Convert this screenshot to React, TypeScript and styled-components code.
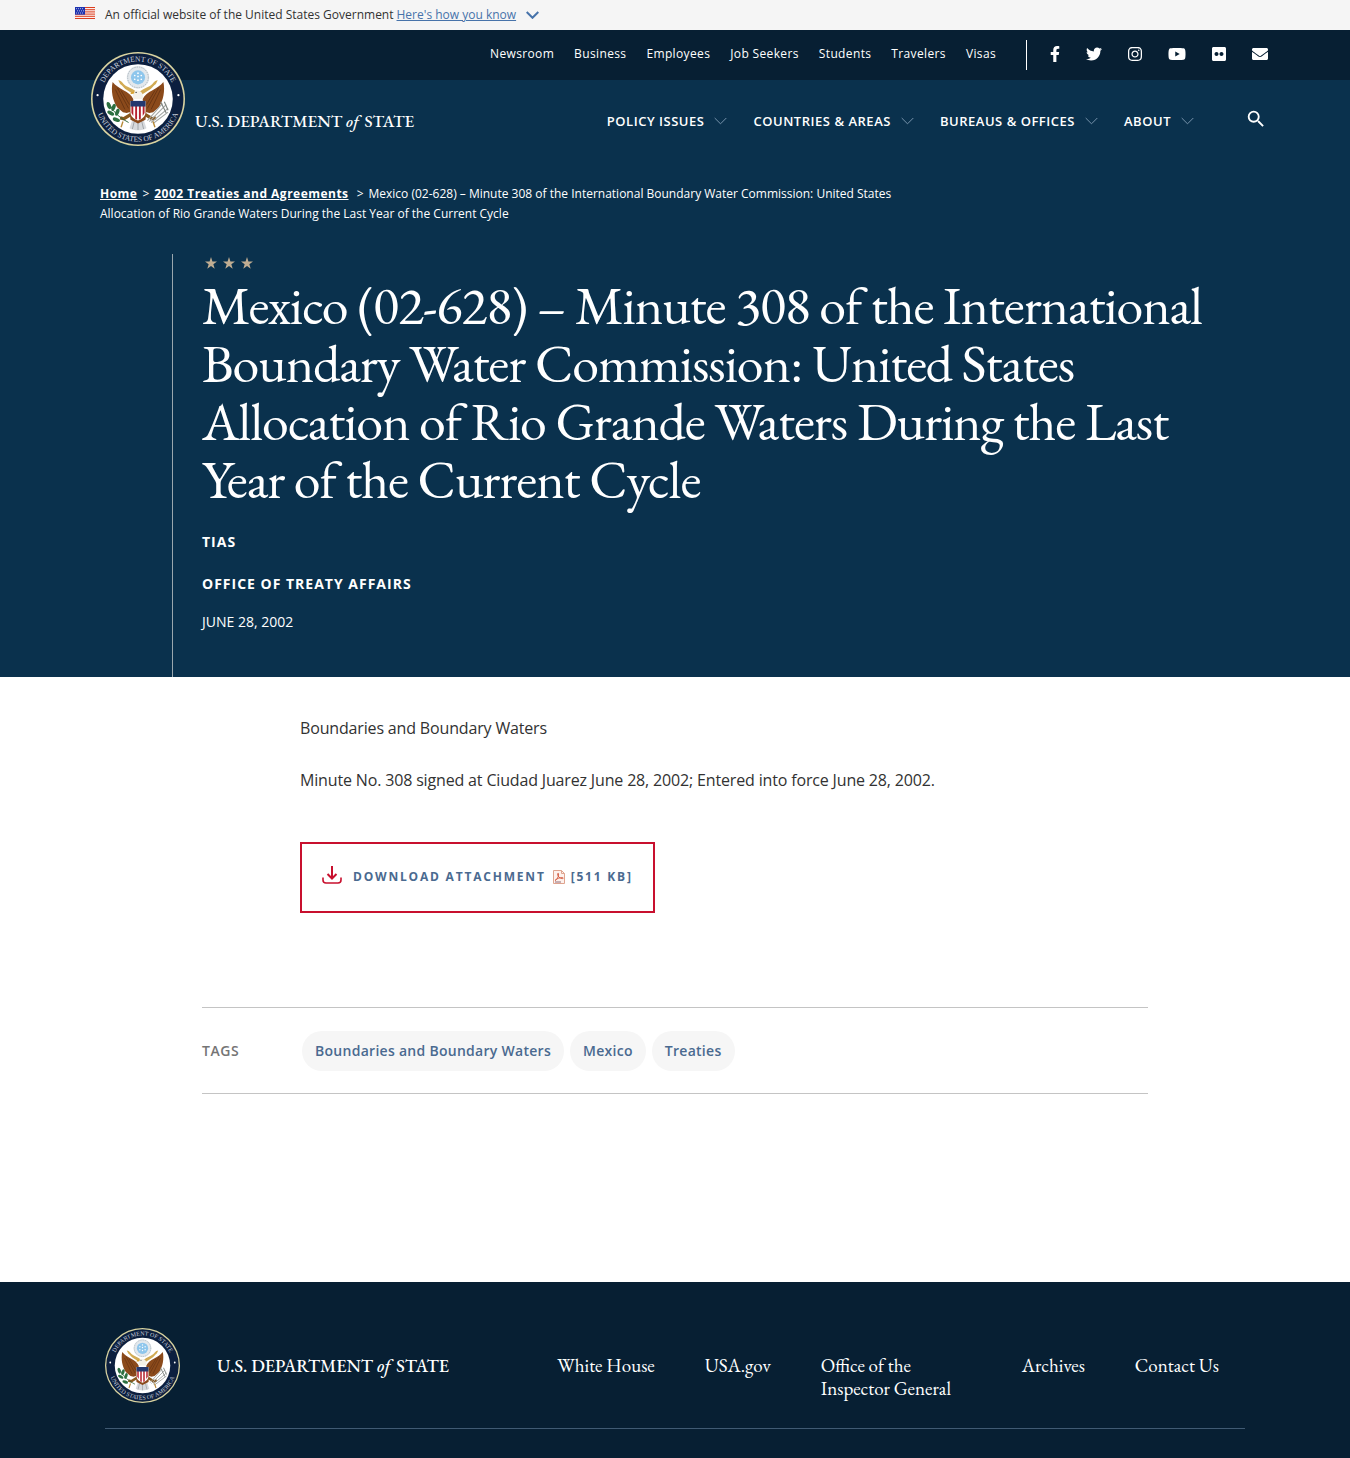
import React from "react";
import styled, { createGlobalStyle } from "styled-components";
import {
  FaFacebookF,
  FaTwitter,
  FaInstagram,
  FaYoutube,
  FaFlickr,
  FaEnvelope,
} from "react-icons/fa";
import { MdSearch } from "react-icons/md";

const navy = "#0a314d";
const midnight = "#071f33";
const sans = '"Open Sans", "Noto Sans", sans-serif';
const serif = '"EB Garamond", "Liberation Serif", serif';

const GlobalStyle = createGlobalStyle`
  *, *::before, *::after { box-sizing: border-box; }
  body { margin: 0; background: #fff; color: #323232; font-family: ${sans}; }
  a { color: inherit; text-decoration: none; }
  ul, ol { list-style: none; margin: 0; padding: 0; }
  p, h1, h2 { margin: 0; }
  button { background: none; border: 0; padding: 0; font: inherit; color: inherit; cursor: pointer; }
  svg { display: block; flex: none; }
`;

const GovBanner = styled.aside`
  display: flex;
  align-items: flex-start;
  height: 30px;
  padding: 0 75px;
  background: #f5f5f5;
  font-size: 12px;
  line-height: 30px;

  > svg {
    margin-top: 7px;
  }
`;

const BannerText = styled.p`
  margin-left: 10px;
`;

const BannerButton = styled.button`
  display: inline-flex;
  align-items: center;
  gap: 10px;
  margin-left: 3px;
  color: #4773aa;

  span {
    text-decoration: underline;
  }
`;

const Header = styled.header`
  background: ${navy};
  color: #fff;
`;

const UtilityBar = styled.div`
  display: flex;
  justify-content: flex-end;
  align-items: center;
  height: 50px;
  padding-right: 82px;
  background: ${midnight};
`;

const UtilityLinks = styled.ul`
  display: flex;
  gap: 20px;
  font-size: 12px;
  line-height: 18px;
  letter-spacing: 0.03em;
  padding-bottom: 2px;
`;

const SocialLinks = styled.ul`
  display: flex;
  align-items: center;
  gap: 26px;
  height: 30px;
  margin-left: 30px;
  padding: 0 0 2px 23px;
  border-left: 1px solid #fff;
`;

const MainBar = styled.div`
  display: flex;
  align-items: flex-start;
  justify-content: space-between;
  height: 100px;
  padding: 0 83px 0 91px;
`;

const Brand = styled.a`
  display: flex;
  align-items: flex-start;
  gap: 10px;

  svg {
    margin-top: -28px;
  }
`;

const BrandName = styled.span<{ $size: number; $top: number }>`
  padding-top: ${(p) => p.$top}px;
  font-family: ${serif};
  font-size: ${(p) => p.$size}px;
  font-weight: 500;
  line-height: 24px;
  white-space: nowrap;

  em {
    margin-right: 2px;
  }
`;

const MainNav = styled.nav`
  display: flex;
  align-items: flex-start;
  padding-top: 28px;
`;

const MainLinks = styled.ul`
  display: flex;
  gap: 26px;
  padding-top: 2px;
`;

const MenuButton = styled.button`
  display: flex;
  align-items: center;
  gap: 10px;
  font-size: 13px;
  font-weight: 600;
  line-height: 22px;
  letter-spacing: 0.04em;
  text-transform: uppercase;
`;

const SearchButton = styled.button`
  margin-left: 51px;
`;

const Hero = styled.section`
  background: ${navy};
  color: #fff;
  padding-top: 4px;
`;

const Crumbs = styled.nav`
  width: 60%;
  margin-left: 100px;
  font-size: 12px;
  line-height: 20px;

  a {
    font-weight: 700;
    text-decoration: underline;
    letter-spacing: 0.04em;
  }
`;

const CrumbArrow = styled.span`
  margin: 0 5px;
`;

const HeroBody = styled.div`
  margin: 30px 130px 0 172px;
  padding: 3px 0 43px 29px;
  border-left: 1px solid #9aa7ae;
`;

const Stars = styled.div`
  display: flex;
  gap: 6px;
  padding: 0 3px;
  color: #c0ad92;
  margin-bottom: 7px;
`;

const Title = styled.h1`
  margin-bottom: 22px;
  font-family: ${serif};
  font-size: 54px;
  font-weight: 400;
  line-height: 58px;
  letter-spacing: -0.02em;
`;

const Eyebrow = styled.p`
  margin-bottom: 18px;
  font-size: 14px;
  font-weight: 700;
  line-height: 24px;
  letter-spacing: 1px;
  text-transform: uppercase;
`;

const DateLine = styled.p`
  margin-top: -4px;
  font-size: 14px;
  line-height: 24px;
  text-transform: uppercase;
`;

const Article = styled.article`
  padding: 38px 202px 188px;
`;

const Prose = styled.div`
  padding: 0 98px;

  p {
    font-size: 16px;
    line-height: 26px;
    letter-spacing: -0.01em;
    margin-bottom: 26px;
  }
`;

const Download = styled.a`
  display: inline-flex;
  align-items: center;
  height: 71px;
  margin-top: 23px;
  padding: 0 20px 2px;
  border: 2px solid #c8102e;
  color: #4a6a90;
  font-size: 12px;
  font-weight: 700;
  letter-spacing: 0.15em;
  text-transform: uppercase;

  > svg {
    margin: 0 11px 4px 0;
  }
`;

const FileSize = styled.span`
  display: flex;
  align-items: center;
  gap: 6px;
  margin-left: 7px;
`;

const TagBar = styled.section`
  display: flex;
  align-items: center;
  margin-top: 94px;
  height: 87px;
  border-top: 1px solid #c4c4c4;
  border-bottom: 1px solid #c4c4c4;
`;

const TagHeading = styled.h2`
  width: 100px;
  font-size: 14px;
  font-weight: 600;
  line-height: 24px;
  letter-spacing: 0.04em;
  color: #757575;
  text-transform: uppercase;
`;

const TagList = styled.ul`
  display: flex;
  gap: 6px;
`;

const Tag = styled.a`
  display: block;
  padding: 0 13px;
  border-radius: 20px;
  background: #f6f6f6;
  color: #4a6a90;
  font-size: 14px;
  font-weight: 600;
  line-height: 40px;
  letter-spacing: 0.02em;
`;

const Footer = styled.footer`
  padding: 46px 105px 29px;
  background: ${midnight};
  color: #fff;
`;

const FooterRow = styled.div`
  display: flex;
  align-items: flex-start;
  justify-content: space-between;
  padding: 0 26px 25px 0;
  border-bottom: 1px solid #405a73;
`;

const FooterBrand = styled.a`
  display: flex;
  gap: 37px;
`;

const FooterLinks = styled.ul`
  display: flex;
  gap: 50px;
  padding-top: 26px;
  font-family: ${serif};
  font-size: 19px;
  line-height: 23px;
`;

const FooterItem = styled.li<{ $width?: number }>`
  width: ${(p) => (p.$width ? `${p.$width}px` : "auto")};
`;

function Flag() {
  return (
    <svg width="20" height="12" viewBox="0 0 20 11" preserveAspectRatio="none" aria-hidden="true">
      <rect width="20" height="11" fill="#fff" />
      {[0, 2, 4, 6, 8, 10].map((y) => (
        <rect key={y} y={y} width="20" height="1" fill="#db3e1f" />
      ))}
      <rect width="10" height="7" fill="#1e33b1" />
      {[1, 3, 5].map((y) =>
        [1, 3, 5, 7].map((x) => (
          <rect key={`${x}-${y}`} x={x + (y === 3 ? 1 : 0)} y={y} width="1" height="1" fill="#a5add8" />
        ))
      )}
    </svg>
  );
}

function Chevron({ color, weight }: { color: string; weight: number }) {
  return (
    <svg width="13" height="8" viewBox="0 0 13 8" fill="none" aria-hidden="true">
      <path d="M.7 1l5.8 5.8L12.3 1" stroke={color} strokeWidth={weight} />
    </svg>
  );
}

function Star() {
  return (
    <svg width="12" height="12" viewBox="0 0 24 24" aria-hidden="true">
      <path
        fill="currentColor"
        d="M12 0l2.9 9H24l-7.300 5.500L19.400 23.500 12 18l-7.400 5.500 2.700-9L0 9h9.100z"
      />
    </svg>
  );
}

function Seal({ size, id }: { size: number; id: string }) {
  return (
    <svg width={size} height={size} viewBox="0 0 100 100" aria-hidden="true">
      <defs>
        <path id={`${id}-top`} d="M10 50a40 40 0 0 1 80 0" />
        <path id={`${id}-bottom`} d="M4.500 50a45.500 45.500 0 0 0 91 0" />
      </defs>
      <circle cx="50" cy="50" r="50" fill="#d9d3a0" />
      <circle cx="50" cy="50" r="48.300" fill="#0c1f3f" />
      <circle cx="50" cy="50" r="37" fill="#fff" />
      <g fill="#c9cfdc" fontFamily="Liberation Serif, serif" fontSize="8" textAnchor="middle">
        <text>
          <textPath href={`#${id}-top`} startOffset="50%">DEPARTMENT OF STATE</textPath>
        </text>
        <text>
          <textPath href={`#${id}-bottom`} startOffset="50%">UNITED STATES OF AMERICA</textPath>
        </text>
      </g>
      <circle cx="7" cy="46" r="1.200" fill="#fff" />
      <circle cx="93" cy="46" r="1.200" fill="#fff" />

      {/* scroll across the wings */}
      <path d="M29 30c4 0 5 5 10 7s7 4 11 6c4-2 6-4 11-6s6-7 10-7l-2 4c-3 2-4 5-8 7l-8 5h-6l-8-5c-4-2-5-5-8-7z" fill="#d2ab54" />

      {/* glory */}
      <circle cx="50" cy="27" r="12" fill="#e3e8ec" />
      <circle cx="50" cy="27" r="11" fill="none" stroke="#aab4bc" strokeWidth="1" strokeDasharray="1.500 1" />
      <circle cx="50" cy="27" r="7.500" fill="#8ec6ec" />
      <g fill="#fff">
        <circle cx="50" cy="22.500" r=".9" />
        <circle cx="46.500" cy="25" r=".9" />
        <circle cx="50" cy="26" r=".9" />
        <circle cx="53.500" cy="25" r=".9" />
        <circle cx="46.500" cy="29" r=".9" />
        <circle cx="50" cy="30" r=".9" />
        <circle cx="53.500" cy="29" r=".9" />
      </g>

      {/* wings */}
      <path
        d="M23 32c-2 9 0 20 5 27l6 5 4 1 6-2 1-13c-2-4-6-7-10-9-5-3-9-5-12-9z"
        fill="#8b4a1b"
      />
      <path
        d="M77 32c2 9 0 20-5 27l-6 5-4 1-6-2-1-13c2-4 6-7 10-9 5-3 9-5 12-9z"
        fill="#8b4a1b"
      />
      <path
        d="M26 40l10 21M28 38l12 22M32 41l9 15M74 40L64 61M72 38L60 60M68 41l-9 15"
        stroke="#5f2f10"
        strokeWidth=".8"
        fill="none"
      />

      {/* tail and legs */}
      <path d="M44 72h12l3 9c-5 3-13 3-18 0z" fill="#d8dadd" />
      <path d="M46 74l-2 8M50 74v9M54 74l2 8" stroke="#8f9499" strokeWidth=".8" />
      <path d="M43 66l-8 5-4-1M57 66l8 5 4-1" stroke="#8b5a1f" strokeWidth="3.500" fill="none" />
      <path d="M41 62h18l-1 10-8 4-8-4z" fill="#8b4a1b" />

      {/* olive branch */}
      <path d="M19 54c4 8 8 14 21 21" stroke="#2f6a3c" strokeWidth="1" fill="none" />
      <g fill="#2c7040">
        <ellipse cx="19" cy="57" rx="2" ry="4" transform="rotate(-20 19 57)" />
        <ellipse cx="24" cy="59" rx="2" ry="4" transform="rotate(20 24 59)" />
        <ellipse cx="21" cy="65" rx="2" ry="4" transform="rotate(-60 21 65)" />
        <ellipse cx="28" cy="64" rx="2" ry="4" transform="rotate(20 28 64)" />
        <ellipse cx="27" cy="72" rx="2" ry="4" transform="rotate(-70 27 72)" />
      </g>

      {/* arrows */}
      <path d="M62 74l18-18M64 75l18-15M60 73l16-18M66 76l16-12" stroke="#a6a9a6" strokeWidth="1.200" />
      <path d="M74 53l6 12M78 53l4 9" stroke="#7f8580" strokeWidth="1.200" />
      <path d="M34 74l-2 6M66 74l2 6" stroke="#b78a3a" strokeWidth="1.500" />

      {/* head and neck */}
      <path d="M45 50c-1-5 0-9 4-9 5 0 7 4 6 9z" fill="#f4f1e8" />
      <path d="M46 42c-2 0-4 1-4 3l4-1z" fill="#d8a22e" />
      <circle cx="48" cy="43" r=".7" fill="#333" />

      {/* shield */}
      <path d="M42 52h16v12c0 5-4 7-8 9-4-2-8-4-8-9z" fill="#fff" />
      <path d="M43 56h2v12l-2-3zM47 56h2v16l-2-1zM51 56h2v15l-2 1zM55 56h2v9l-2 3z" fill="#b5202e" />
      <path d="M42 52h16v6H42z" fill="#25386e" />
    </svg>
  );
}

function DownloadIcon() {
  return (
    <svg
      width="20"
      height="18"
      viewBox="0 0 20 18"
      fill="none"
      stroke="#c8102e"
      strokeWidth="2"
      aria-hidden="true"
    >
      <path d="M10 0v12M5.500 8L10 12.500 14.500 8" />
      <path d="M1 11.500v2.500a3 3 0 0 0 3 3h12a3 3 0 0 0 3-3v-2.500" strokeWidth="1.600" />
    </svg>
  );
}

function PdfIcon() {
  return (
    <svg width="12" height="14" viewBox="0 0 12 14" fill="none" aria-hidden="true">
      <path d="M.5.5h8l3 3v10H.5z" fill="#fdf1ec" stroke="#dfa48f" />
      <path d="M8.500.5v3h3" stroke="#dfa48f" />
      <path
        d="M2 10.500c2-.8 3.600-3.500 3.600-6.500 0-1-1-1-1 0 0 2.500 2.200 4.500 5 4.600.9 0 .8-1 0-1C6.500 7.600 3.800 8.500 2 10.500z"
        stroke="#d4593e"
        strokeWidth=".9"
      />
      <path d="M2 12h6" stroke="#8f6a78" />
    </svg>
  );
}

const utility = ["Newsroom", "Business", "Employees", "Job Seekers", "Students", "Travelers", "Visas"];

const SocialIcon = styled.span<{ $width: number }>`
  display: block;

  svg {
    width: ${(p) => p.$width}px;
    height: 16px;
  }
`;

const social = [
  { label: "Facebook", Icon: FaFacebookF, width: 10 },
  { label: "Twitter", Icon: FaTwitter, width: 16 },
  { label: "Instagram", Icon: FaInstagram, width: 14 },
  { label: "YouTube", Icon: FaYoutube, width: 18 },
  { label: "Flickr", Icon: FaFlickr, width: 14 },
  { label: "Email", Icon: FaEnvelope, width: 16 },
];

const menus = ["Policy Issues", "Countries & Areas", "Bureaus & Offices", "About"];

const tags = ["Boundaries and Boundary Waters", "Mexico", "Treaties"];

const footerLinks: { label: string; width?: number }[] = [
  { label: "White House" },
  { label: "USA.gov" },
  { label: "Office of the Inspector General", width: 151 },
  { label: "Archives" },
  { label: "Contact Us" },
];

const title =
  "Mexico (02-628) – Minute 308 of the International Boundary Water Commission: United States Allocation of Rio Grande Waters During the Last Year of the Current Cycle";

export default function App() {
  return (
    <>
      <GlobalStyle />
      <GovBanner>
        <Flag />
        <BannerText>An official website of the United States Government</BannerText>
        <BannerButton type="button">
          <span>Here's how you know</span>
          <Chevron color="#4773aa" weight={2} />
        </BannerButton>
      </GovBanner>

      <Header>
        <UtilityBar>
          <UtilityLinks>
            {utility.map((label) => (
              <li key={label}>
                <a href="#">{label}</a>
              </li>
            ))}
          </UtilityLinks>
          <SocialLinks>
            {social.map(({ label, Icon, width }) => (
              <li key={label}>
                <a href="#" aria-label={label}>
                  <SocialIcon $width={width}>
                    <Icon />
                  </SocialIcon>
                </a>
              </li>
            ))}
          </SocialLinks>
        </UtilityBar>
        <MainBar>
          <Brand href="#">
            <Seal size={94} id="header-seal" />
            <BrandName $size={17} $top={29}>
              U.S. DEPARTMENT <em>of</em> STATE
            </BrandName>
          </Brand>
          <MainNav>
            <MainLinks>
              {menus.map((label) => (
                <li key={label}>
                  <MenuButton type="button">
                    {label}
                    <Chevron color="#7793ab" weight={1} />
                  </MenuButton>
                </li>
              ))}
            </MainLinks>
            <SearchButton type="button" aria-label="Search">
              <MdSearch size={22} />
            </SearchButton>
          </MainNav>
        </MainBar>
      </Header>

      <main>
        <Hero>
          <Crumbs>
            <a href="#">Home</a>
            <CrumbArrow>&gt;</CrumbArrow>
            <a href="#">2002 Treaties and Agreements</a>{" "}
            <CrumbArrow>&gt;</CrumbArrow>
            {title}
          </Crumbs>
          <HeroBody>
            <Stars>
              <Star />
              <Star />
              <Star />
            </Stars>
            <Title>{title}</Title>
            <Eyebrow>TIAS</Eyebrow>
            <Eyebrow>Office of Treaty Affairs</Eyebrow>
            <DateLine>June 28, 2002</DateLine>
          </HeroBody>
        </Hero>

        <Article>
          <Prose>
            <p>Boundaries and Boundary Waters</p>
            <p>Minute No. 308 signed at Ciudad Juarez June 28, 2002; Entered into force June 28, 2002.</p>
            <Download href="#">
              <DownloadIcon />
              Download Attachment
              <FileSize>
                <PdfIcon />
                [511 KB]
              </FileSize>
            </Download>
          </Prose>
          <TagBar>
            <TagHeading>Tags</TagHeading>
            <TagList>
              {tags.map((tag) => (
                <li key={tag}>
                  <Tag href="#">{tag}</Tag>
                </li>
              ))}
            </TagList>
          </TagBar>
        </Article>
      </main>

      <Footer>
        <FooterRow>
          <FooterBrand href="#">
            <Seal size={75} id="footer-seal" />
            <BrandName $size={18} $top={26}>
              U.S. DEPARTMENT <em>of</em> STATE
            </BrandName>
          </FooterBrand>
          <FooterLinks>
            {footerLinks.map(({ label, width }) => (
              <FooterItem key={label} $width={width}>
                <a href="#">{label}</a>
              </FooterItem>
            ))}
          </FooterLinks>
        </FooterRow>
      </Footer>
    </>
  );
}
